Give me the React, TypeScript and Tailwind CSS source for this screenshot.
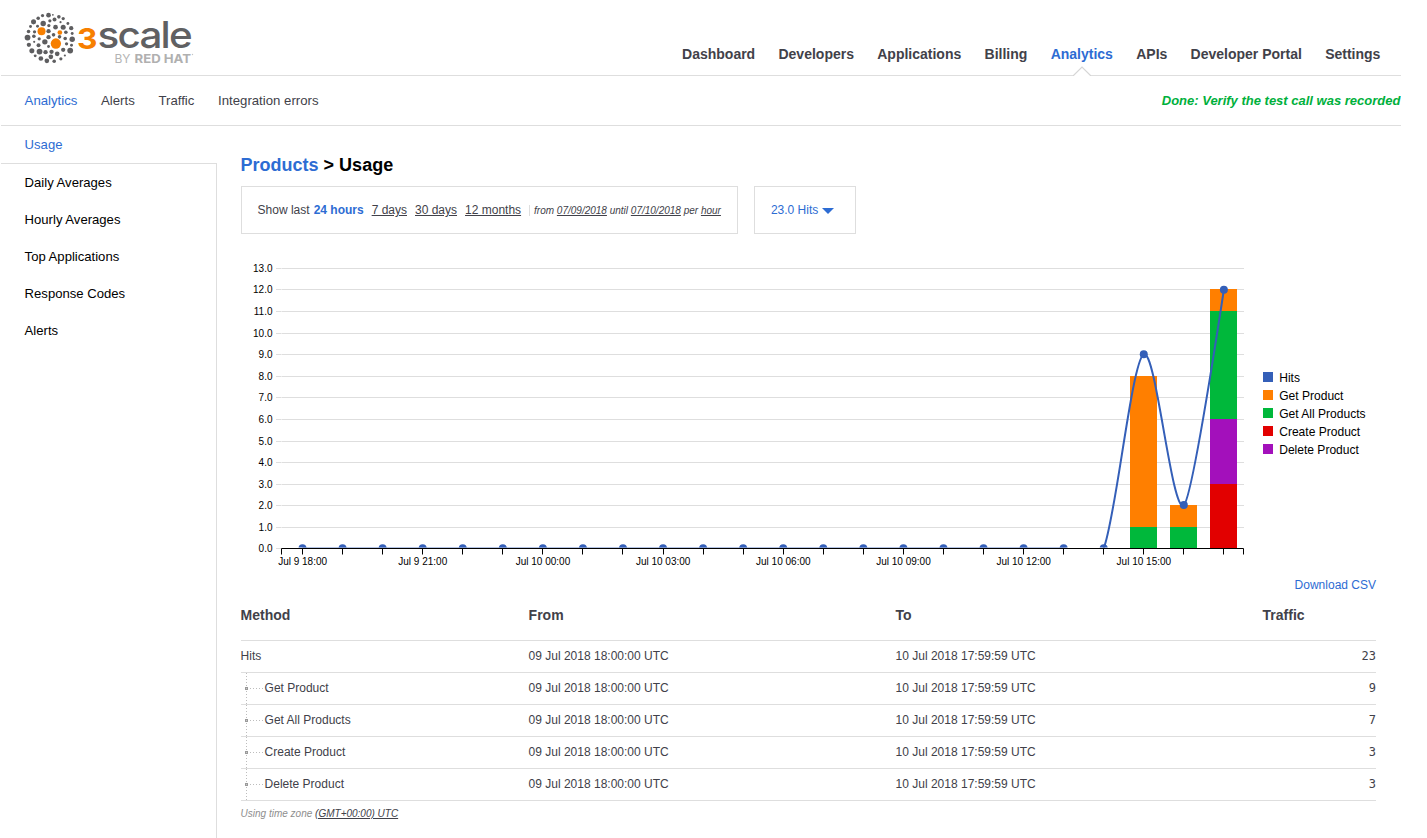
import React from "react";

const SANS = "font-['Liberation_Sans',Arial,sans-serif]";

type Dot = [number, number, number];

const GREY_DOTS: Dot[] = [
  [85, 21, 6.5], [67, 22, 4.5], [54, 30, 5], [40, 41, 7], [98, 20, 2.5], [116, 26, 5], [103, 34, 5.5],
  [129, 31, 4.5], [89, 38, 4.5], [69, 46, 7.5], [121, 42, 3], [143, 46, 4], [31, 55, 4], [52, 54, 4],
  [86, 52, 4.5], [106, 57, 6.5], [129, 57, 7], [153, 60, 6], [25, 70, 5], [43, 71, 4.5], [85, 69, 6],
  [137, 72, 5], [156, 76, 4], [100, 80, 5], [22, 88, 8], [41, 84, 5], [57, 92, 4.5], [85, 87, 6],
  [118, 86, 5], [135, 91, 5], [156, 93, 7.5], [74, 101, 7.5], [42, 101, 3], [26, 110, 6], [55, 111, 5.5],
  [139, 107, 4.5], [154, 111, 4], [85, 115, 4], [129, 125, 6], [150, 127, 8], [35, 128, 7], [58, 130, 8],
  [76, 132, 6], [94, 131, 6], [111, 137, 6.5], [45, 143, 4], [134, 142, 3], [62, 151, 6.5],
  [80, 158, 6.5], [92, 146, 6.5], [102, 159, 5], [122, 152, 4.5],
];

const ORANGE_DOTS: Dot[] = [[64, 69, 12], [119, 73, 7], [107, 106, 15.5]];

function Logo() {
  return (
    <svg width="180" height="60" viewBox="20 8 180 60" className="block" aria-label="3scale by Red Hat">
      <g transform="translate(20.2 8.2) scale(0.33333)">
        {GREY_DOTS.map(([x, y, r], i) => (
          <circle key={i} cx={x} cy={y} r={r * 1.08} fill="#5e5e60" />
        ))}
        {ORANGE_DOTS.map(([x, y, r], i) => (
          <circle key={i} cx={x} cy={y} r={r} fill="#f77f00" />
        ))}
      </g>
      <g fontFamily="Inter, sans-serif">
        <text x="77" y="48.5" fontSize="28.5" fontWeight="700" fill="#f77f00" textLength="20.5" lengthAdjust="spacingAndGlyphs">3</text>
        <text x="97.5" y="48.3" fontSize="37" fontWeight="500" fill="#606062" letterSpacing="-1.6" textLength="93.5" lengthAdjust="spacingAndGlyphs">scale</text>
        <text x="114.5" y="62.6" fontSize="12" fontWeight="400" fill="#b4b4b4" textLength="16" lengthAdjust="spacingAndGlyphs">BY</text>
        <text x="134.5" y="62.6" fontSize="12" fontWeight="700" fill="#b0b0b0" textLength="56.5" lengthAdjust="spacingAndGlyphs">RED HAT</text>
      </g>
      <circle cx="192.5" cy="54.5" r="0.7" fill="#c4c4c4" />
    </svg>
  );
}

const NAV = ["Dashboard", "Developers", "Applications", "Billing", "Analytics", "APIs", "Developer Portal", "Settings"];
const SUBNAV = ["Analytics", "Alerts", "Traffic", "Integration errors"];
const SIDE = ["Daily Averages", "Hourly Averages", "Top Applications", "Response Codes", "Alerts"];

/* Chart geometry, in page units: the svg's view box starts at (241, 256). */
const GRID_Y = [548, 527, 505, 484, 462, 441, 419, 397, 376, 354, 333, 311, 289, 268];
const HITS = [...Array(21).fill(0), 9, 2, 12] as number[];
const xAt = (i: number) => 302.5 + i * 40.06;
const yAt = (v: number) => 548.2 - (v * 280) / 13;
const X_LABELS = ["Jul 9 18:00", "Jul 9 21:00", "Jul 10 00:00", "Jul 10 03:00", "Jul 10 06:00", "Jul 10 09:00", "Jul 10 12:00", "Jul 10 15:00"];

const BARS = [
  { x: 1130, top: 8, bottom: 1, fill: "#ff7f00" },
  { x: 1130, top: 1, bottom: 0, fill: "#00b83b" },
  { x: 1170, top: 2, bottom: 1, fill: "#ff7f00" },
  { x: 1170, top: 1, bottom: 0, fill: "#00b83b" },
  { x: 1210, top: 12, bottom: 11, fill: "#ff7f00" },
  { x: 1210, top: 11, bottom: 6, fill: "#00b83b" },
  { x: 1210, top: 6, bottom: 3, fill: "#a310bb" },
  { x: 1210, top: 3, bottom: 0, fill: "#e20000" },
];

const LEGEND = [
  { name: "Hits", fill: "#345fb8" },
  { name: "Get Product", fill: "#ff7f00" },
  { name: "Get All Products", fill: "#00b83b" },
  { name: "Create Product", fill: "#e20000" },
  { name: "Delete Product", fill: "#a310bb" },
];

/* Cardinal spline with tension 0.7. */
function splinePath(values: number[]) {
  const p = values.map((v, i) => [xAt(i), yAt(v)]);
  const n = p.length;
  const tangent = (i: number) => [0.15 * (p[i + 1][0] - p[i - 1][0]), 0.15 * (p[i + 1][1] - p[i - 1][1])];
  let d = `M${p[0][0]},${p[0][1]}L${p[1][0]},${p[1][1]}`;
  for (let i = 1; i < n - 2; i++) {
    const a = tangent(i);
    const b = tangent(i + 1);
    d += `C${p[i][0] + a[0]},${p[i][1] + a[1]},${p[i + 1][0] - b[0]},${p[i + 1][1] - b[1]},${p[i + 1][0]},${p[i + 1][1]}`;
  }
  const t = tangent(n - 2);
  d += `Q${p[n - 2][0] + (t[0] * 2) / 3},${p[n - 2][1] + (t[1] * 2) / 3},${p[n - 1][0]},${p[n - 1][1]}`;
  return d;
}

function UsageChart() {
  return (
    <svg width="1136" height="320" viewBox="241 256 1136 320" className="block">
      <defs>
        <clipPath id="plot">
          <rect x="281" y="256" width="963" height="291.6" />
        </clipPath>
      </defs>
      {GRID_Y.map((y, v) => (
        <g key={y}>
          <rect x="276" y={y} width="5" height="1" fill="#dedede" />
          <rect x="281" y={y} width="1" height="1" fill="#ececec" />
          <rect x="282" y={y} width="962" height="1" fill="#dedede" />
          <text x="272.5" y={y + 3.9} textAnchor="end" fontSize="10" fill="#000">
            {v}.0
          </text>
        </g>
      ))}
      {BARS.map((b, i) => (
        <rect key={i} x={b.x} y={GRID_Y[b.top]} width="27" height={GRID_Y[b.bottom] - GRID_Y[b.top]} fill={b.fill} />
      ))}
      <g clipPath="url(#plot)">
        <path d={splinePath(HITS)} fill="none" stroke="#345fb8" strokeWidth="2" />
        {HITS.map((v, i) => (
          <circle key={i} cx={xAt(i)} cy={yAt(v)} r="4" fill="#345fb8" />
        ))}
      </g>
      <path d="M281.5 554.5V548.5H1243.5V554.5" fill="none" stroke="#000" />
      {HITS.map((_, i) => (
        <rect key={i} x={Math.floor(xAt(i))} y="549" width="1" height="5.5" fill="#000" />
      ))}
      {X_LABELS.map((label, i) => (
        <text key={label} x={xAt(i * 3) + 0.1} y="565" textAnchor="middle" fontSize="10" fill="#000">
          {label}
        </text>
      ))}
      {LEGEND.map((l, i) => (
        <g key={l.name}>
          <rect x="1263" y={372 + i * 18} width="10" height="10" fill={l.fill} />
          <text x="1279.2" y={382 + i * 18} fontSize="12.05" fill="#000">
            {l.name}
          </text>
        </g>
      ))}
    </svg>
  );
}

function TreeMark() {
  return (
    <svg width="24" height="32" viewBox="0 0 24 32" className="block shrink-0" shapeRendering="crispEdges">
      <path d="M5.5 0V32" stroke="#bdbdbd" strokeDasharray="1 2" />
      <path d="M9 15.5H22" stroke="#bdbdbd" strokeDasharray="1 2" />
      <rect x="4" y="14" width="3" height="3" fill="#9a9a9a" />
      <rect x="5" y="15" width="1" height="1" fill="#c8c8c8" />
    </svg>
  );
}

const ROWS = [
  { name: "Hits", traffic: 23 },
  { name: "Get Product", traffic: 9 },
  { name: "Get All Products", traffic: 7 },
  { name: "Create Product", traffic: 3 },
  { name: "Delete Product", traffic: 3 },
];

export default function App() {
  return (
    <div className={`${SANS} ml-px flex h-[838px] w-[1400px] flex-col overflow-hidden bg-white text-[#414149]`}>
      <header className="flex h-[76px] shrink-0 justify-between border-b border-[#dedede] pt-2 pr-[20.6px] pl-[19px]">
        <Logo />
        <nav className="flex gap-[23.3px] pt-[37px] text-sm leading-[18px] font-bold">
          {NAV.map((item) =>
            item === "Analytics" ? (
              <span key={item} className="relative text-[#2d6cd3]">
                {item}
                <svg width="18" height="10" viewBox="0 0 18 10" className="absolute top-[21px] left-[22px]">
                  <path d="M0.5 9.5L9 1L17.5 9.5V10H0.5Z" fill="#fff" />
                  <path d="M0 9.5H0.5L9 1L17.5 9.5H18" fill="none" stroke="#d6d6d6" strokeWidth="1.2" />
                </svg>
              </span>
            ) : (
              <span key={item}>{item}</span>
            ),
          )}
        </nav>
      </header>

      <div className="flex h-[50px] shrink-0 items-center justify-between border-b border-[#dedede] pr-[0.6px] pl-[23.6px] text-[13px]">
        <nav className="flex gap-[23.7px] text-[13.2px]">
          {SUBNAV.map((item, i) => (
            <span key={item} className={i === 0 ? "text-[#2d6cd3]" : ""}>
              {item}
            </span>
          ))}
        </nav>
        <span className="font-bold text-[#00b03c] italic">Done: Verify the test call was recorded</span>
      </div>

      <div className="flex min-h-0 flex-1">
        <aside className="flex w-[216px] shrink-0 flex-col text-[13.1px] text-black">
          <div className="flex h-[37px] shrink-0 items-center pl-[23.6px] text-[#2d6cd3]">Usage</div>
          <div className="flex-1 border-t border-r border-[#dedede]">
            {SIDE.map((item) => (
              <div key={item} className="flex h-[37px] items-center pl-[23.6px]">
                {item}
              </div>
            ))}
          </div>
        </aside>

        <main className="ml-[23.6px] w-[1135.4px] shrink-0 pt-7">
          <h1 className="text-lg leading-[22px] font-bold text-black">
            <span className="text-[#2d6cd3]">Products</span> &gt; Usage
          </h1>

          <div className="mt-[10px] flex h-12 gap-4 text-xs">
            <div className="flex w-[497px] items-center border border-[#dedede] pl-4 whitespace-nowrap">
              <span>Show last</span>
              <b className="ml-1 text-[#2d6cd3]">24 hours</b>
              <span className="ml-2 underline">7 days</span>
              <span className="ml-2 underline">30 days</span>
              <span className="ml-2 underline">12 months</span>
              <span className="ml-2 h-[11px] border-l border-[#dedede]" />
              <i className="ml-1 pt-px text-[10px]">
                from <u>07/09/2018</u> until <u>07/10/2018</u> per <u>hour</u>
              </i>
            </div>
            <div className="flex w-[102px] items-center border border-[#dedede] pl-[16.3px] text-[#2d6cd3]">
              23.0 Hits
              <svg width="12" height="6" viewBox="0 0 12 6" className="mt-[2px] ml-1">
                <path d="M0 0H12L6 6Z" fill="#2d6cd3" />
              </svg>
            </div>
          </div>

          <div className="mt-[22px] ml-[0.4px]">
            <UsageChart />
          </div>

          <div className="h-[18px] text-right text-xs leading-[18px] text-[#2d6cd3]">Download CSV</div>

          <div className="flex h-[47px] border-b border-[#dedede] pt-[12px] text-sm leading-[18px] font-bold">
            <span className="w-[288px]">Method</span>
            <span className="w-[367px]">From</span>
            <span className="w-[367px]">To</span>
            <span>Traffic</span>
          </div>
          {ROWS.map((row, i) => (
            <div key={row.name} className="flex h-8 border-b border-[#dedede] text-xs leading-[30px]">
              <span className="flex w-[288px]">
                {i > 0 && <TreeMark />}
                {row.name}
              </span>
              <span className="w-[367px]">09 Jul 2018 18:00:00 UTC</span>
              <span className="w-[367px]">10 Jul 2018 17:59:59 UTC</span>
              <span className="flex-1 text-right font-['DejaVu_Sans_Mono',monospace]">{row.traffic}</span>
            </div>
          ))}
          <div className="pt-[6px] text-[10px] leading-[14px] text-[#8e8e8e] italic">
            Using time zone <u className="text-[#414149]">(GMT+00:00) UTC</u>
          </div>
        </main>
      </div>
    </div>
  );
}
